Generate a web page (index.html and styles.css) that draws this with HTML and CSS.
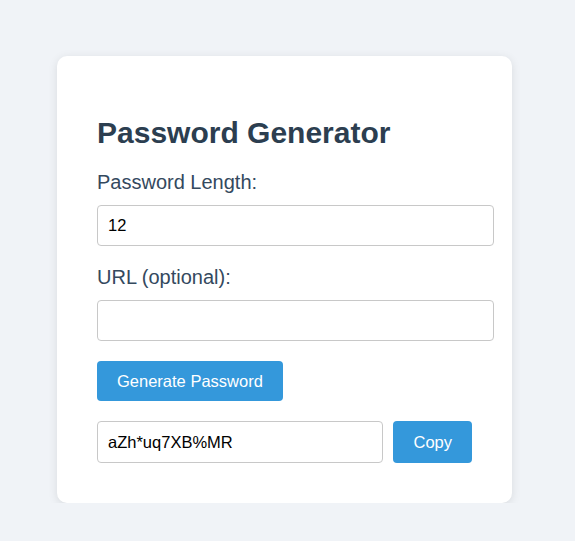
FILE: index.html
```html
<!DOCTYPE html>
<html lang="en">
<head>
<meta charset="utf-8">
<title>Password Generator</title>
<link rel="stylesheet" href="styles.css">
</head>
<body>
<div class="card">
  <h1 class="title">Password Generator</h1>
  <div class="field">
    <label class="label" for="length">Password Length:</label>
    <input class="input" id="length" type="text" value="12">
  </div>
  <div class="field">
    <label class="label" for="url">URL (optional):</label>
    <input class="input" id="url" type="text" value="">
  </div>
  <div class="field">
    <button class="btn" type="button">Generate Password</button>
  </div>
  <div class="result">
    <input class="input result-input" type="text" value="aZh*uq7XB%MR" readonly>
    <button class="btn" type="button">Copy</button>
  </div>
</div>
</body>
</html>
```
FILE: styles.css
```css
html, body {
  margin: 0;
  padding: 0;
}
body {
  background: #f0f3f7;
  font-family: "Liberation Sans", Arial, sans-serif;
  padding: 56px 0 0 57px;
}
.card {
  width: 375px;
  padding: 40px;
  background: #ffffff;
  border-radius: 10px;
  box-shadow: 0 2px 10px rgba(0, 0, 0, 0.1);
}
.title {
  font-size: 30px;
  font-weight: bold;
  color: #2c3e50;
  margin: 20px 0 21px;
}
.field {
  margin-bottom: 20px;
}
.label {
  display: block;
  font-size: 20px;
  color: #34495e;
  margin-bottom: 10.5px;
}
.input {
  display: block;
  width: 397px;
  height: 41.5px;
  padding: 10px;
  font-size: 16.5px;
  font-family: "Liberation Sans", Arial, sans-serif;
  color: #000;
  border: 1px solid #c8c8c8;
  border-radius: 4px;
  background: #fff;
  margin: 0;
  box-sizing: border-box;
}
.btn {
  background: #3498db;
  color: #fff;
  border: none;
  border-radius: 4px;
  height: 40px;
  padding: 0 20px;
  font-size: 16.5px;
  font-family: "Liberation Sans", Arial, sans-serif;
  cursor: pointer;
}
.result {
  display: flex;
  gap: 10px;
  height: 42px;
}
.result-input {
  flex: 1;
  width: auto;
  height: 42px;
  min-width: 0;
}
.result .btn {
  height: 42px;
}
```
